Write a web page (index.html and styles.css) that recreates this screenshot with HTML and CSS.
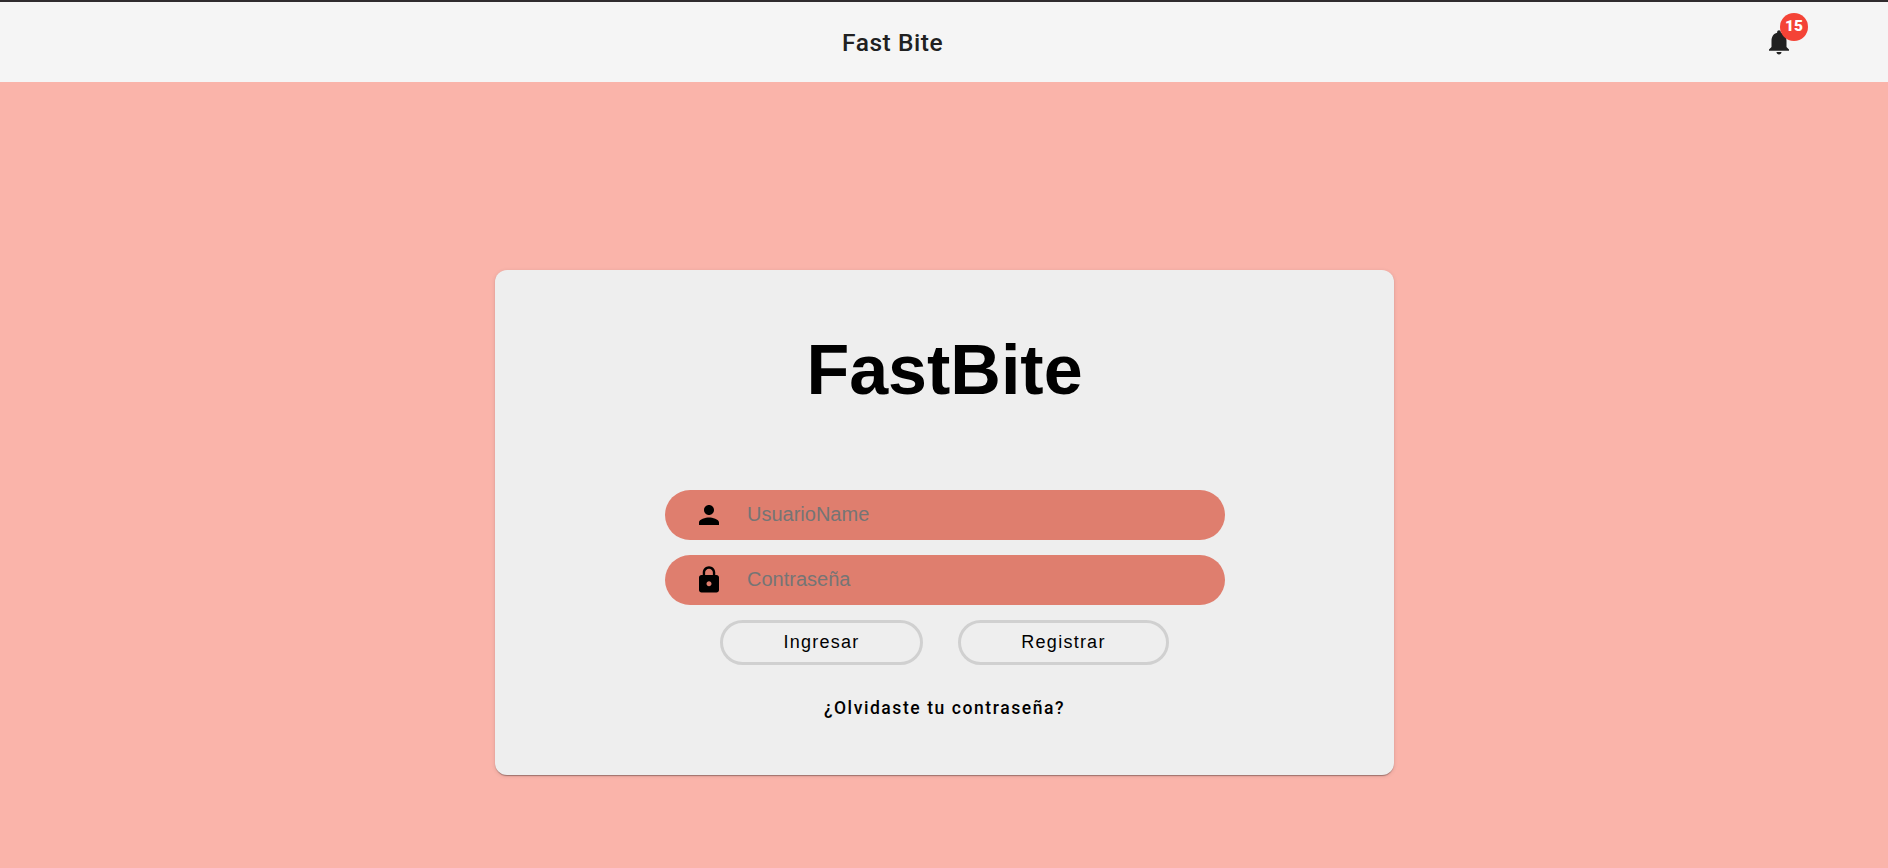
FILE: index.html
```
<!DOCTYPE html>
<html lang="es">
<head>
<meta charset="utf-8">
<title>Fast Bite</title>
<link rel="stylesheet" href="styles.css">
</head>
<body>
<header class="toolbar">
  <span class="toolbar-title">Fast Bite</span>
  <div class="notifications">
    <svg class="icon" viewBox="0 0 24 24"><path d="M12 22c1.1 0 2-.9 2-2h-4c0 1.1.89 2 2 2zm6-6v-5c0-3.07-1.64-5.64-4.5-6.32V4c0-.83-.67-1.5-1.5-1.5s-1.5.67-1.5 1.5v.68C7.63 5.36 6 7.92 6 11v5l-2 2v1h16v-1l-2-2z"/></svg>
    <span class="badge">15</span>
  </div>
</header>
<main class="page">
  <form class="card">
    <h1 class="brand">FastBite</h1>
    <label class="field">
      <svg class="icon" viewBox="0 0 24 24"><path d="M12 12c2.21 0 4-1.79 4-4s-1.79-4-4-4-4 1.79-4 4 1.79 4 4 4zm0 2c-2.67 0-8 1.34-8 4v2h16v-2c0-2.66-5.33-4-8-4z"/></svg>
      <input class="field-input" type="text" placeholder="UsuarioName">
    </label>
    <label class="field">
      <svg class="icon" viewBox="0 0 24 24"><path d="M18 8h-1V6c0-2.76-2.24-5-5-5S7 3.24 7 6v2H6c-1.1 0-2 .9-2 2v10c0 1.1.9 2 2 2h12c1.1 0 2-.9 2-2V10c0-1.1-.9-2-2-2zm-6 9c-1.1 0-2-.9-2-2s.9-2 2-2 2 .9 2 2-.9 2-2 2zm3.100-9H8.900V6c0-1.710 1.390-3.100 3.100-3.100 1.710 0 3.100 1.390 3.100 3.100v2z"/></svg>
      <input class="field-input" type="password" placeholder="Contraseña">
    </label>
    <div class="actions">
      <button class="action login" type="button">Ingresar</button>
      <button class="action register" type="button">Registrar</button>
    </div>
    <a class="forgot">¿Olvidaste tu contraseña?</a>
  </form>
</main>
</body>
</html>
```
FILE: styles.css
```
* { box-sizing: border-box; }
body {
  margin: 0;
  height: 868px;
  display: flex;
  flex-direction: column;
  background: #fab4aa;
  font-family: Roboto, sans-serif;
}
.toolbar {
  height: 82px;
  border-top: 2px solid #302c2e;
  background: #f5f5f5;
  display: flex;
  align-items: center;
  justify-content: space-between;
  padding: 0 94px 0 841px;
  color: #212121;
}
.toolbar-title { font-size: 24.5px; font-weight: 500; letter-spacing: 0.55px; padding: 1px 0 0 1px; }
.icon { display: block; width: 30px; height: 30px; fill: currentColor; }
.notifications { position: relative; }
.badge {
  position: absolute;
  left: 16px;
  top: -14px;
  width: 28px;
  height: 28px;
  border-radius: 50%;
  background: #f44336;
  color: #fff;
  font-size: 15.5px;
  font-weight: 900;
  line-height: 27px;
  text-align: center;
}
.page { flex: 1; display: flex; justify-content: center; align-items: flex-start; padding-top: 188px; }
.card {
  width: 899px;
  height: 505px;
  margin-left: 1px;
  border-radius: 12px;
  background: #eee;
  box-shadow: 0 2px 1px -1px rgba(0,0,0,.2), 0 1px 1px rgba(0,0,0,.14), 0 1px 4px rgba(0,0,0,.12);
  display: flex;
  flex-direction: column;
  align-items: center;
  padding-top: 60px;
}
.brand {
  margin: 0 0 80px;
  height: 80px;
  font: 700 70px/80px "Liberation Sans", Arial, sans-serif;
  color: #000;
}
.field {
  width: 560px;
  height: 50px;
  margin: 0 0 15px;
  border-radius: 25px;
  background: #df7e6e;
  display: flex;
  align-items: center;
  padding-left: 29.5px;
  gap: 23px;
}
.field-input {
  border: 0;
  padding: 0 0 2px;
  width: 400px;
  background: transparent;
  outline: 0;
  font: 20px "Liberation Sans", Arial, sans-serif;
}
.field-input::placeholder { color: #757575; }
.actions { display: flex; gap: 35px; margin-bottom: 30px; }
.action {
  height: 45px;
  padding: 0;
  border: 3px solid #d0d0d0;
  border-radius: 23px;
  background: transparent;
  color: #000;
  font: 18px "Liberation Sans", Arial, sans-serif;
  letter-spacing: 1.25px;
}
.login { width: 203px; }
.register { width: 211px; }
.forgot { color: #000; font-size: 17.5px; font-weight: 500; line-height: 26px; letter-spacing: 1.57px; }
```
